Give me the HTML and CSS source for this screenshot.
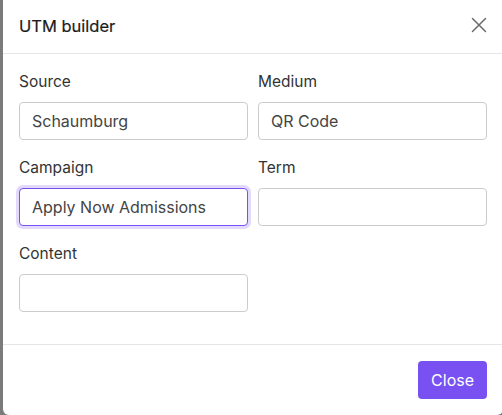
FILE: index.html
```html
<!DOCTYPE html>
<html lang="en">
<head>
    <meta charset="UTF-8">
    <meta name="viewport" content="width=device-width, initial-scale=1.0">
    <title>UTM builder</title>
    <link rel="stylesheet" href="styles.css">
</head>
<body>
    <div class="backdrop">
        <div class="modal">
            <div class="modal-header">
                <h1 class="modal-title">UTM builder</h1>
                <button class="modal-close" aria-label="Close">
                    <svg width="16" height="16" viewBox="0 0 16 16">
                        <path d="M1.5 1.5 L14.5 14.5 M14.5 1.5 L1.5 14.5" stroke="#6b6b6b" stroke-width="1.5" stroke-linecap="round" fill="none"/>
                    </svg>
                </button>
            </div>

            <form class="modal-body">
                <div class="field">
                    <label for="utm-source">Source</label>
                    <input type="text" id="utm-source" value="Schaumburg">
                </div>
                <div class="field">
                    <label for="utm-medium">Medium</label>
                    <input type="text" id="utm-medium" value="QR Code">
                </div>
                <div class="field">
                    <label for="utm-campaign">Campaign</label>
                    <input type="text" id="utm-campaign" class="is-focused" value="Apply Now Admissions">
                </div>
                <div class="field">
                    <label for="utm-term">Term</label>
                    <input type="text" id="utm-term">
                </div>
                <div class="field">
                    <label for="utm-content">Content</label>
                    <input type="text" id="utm-content">
                </div>
            </form>

            <div class="modal-footer">
                <button class="btn-primary">Close</button>
            </div>
        </div>
    </div>
</body>
</html>
```

FILE: styles.css
```css
body {
    font-family: 'Inter', 'Liberation Sans', Arial, sans-serif;
    margin: 0;
    padding: 0;
    background-color: #7b7b7b;
    overflow: hidden;
}

.backdrop {
    padding-left: 3px;
}

.modal {
    width: 500px;
    background-color: #fff;
    border-radius: 0 0 6px 6px;
}

.modal-header {
    height: 53px;
    padding: 0 16px;
    display: flex;
    align-items: center;
    justify-content: space-between;
    border-bottom: 1px solid #e6e6e6;
}

.modal-title {
    margin: 0 0 2px;
    font-size: 16.5px;
    font-weight: 400;
    color: #1c1c1c;
    -webkit-text-stroke: 0.2px #1c1c1c;
}

.modal-close {
    border: none;
    background: none;
    padding: 0;
    width: 16px;
    height: 16px;
    margin-top: -4px;
    cursor: pointer;
}

.modal-body {
    display: grid;
    grid-template-columns: 1fr 1fr;
    column-gap: 10px;
    row-gap: 16px;
    padding: 16px 16px 32px;
    margin: 0;
}

.field label {
    display: block;
    font-size: 15.5px;
    line-height: 24px;
    color: #333;
    margin-bottom: 8px;
}

.field input {
    box-sizing: border-box;
    width: 100%;
    height: 38px;
    padding: 0 12px;
    font-family: inherit;
    font-size: 16px;
    color: #444;
    border: 1px solid #cccccc;
    border-radius: 4px;
    outline: none;
}

.field input.is-focused {
    border-color: #7950f2;
    box-shadow: 0 0 0 3px rgba(121, 80, 242, 0.22);
}

.modal-footer {
    border-top: 1px solid #e6e6e6;
    padding: 16px;
    display: flex;
    justify-content: flex-end;
}

.btn-primary {
    height: 38px;
    padding: 0 13px;
    font-family: inherit;
    font-size: 16px;
    font-weight: 400;
    color: #fff;
    background-color: #7950f2;
    border: none;
    border-radius: 4px;
}
```
